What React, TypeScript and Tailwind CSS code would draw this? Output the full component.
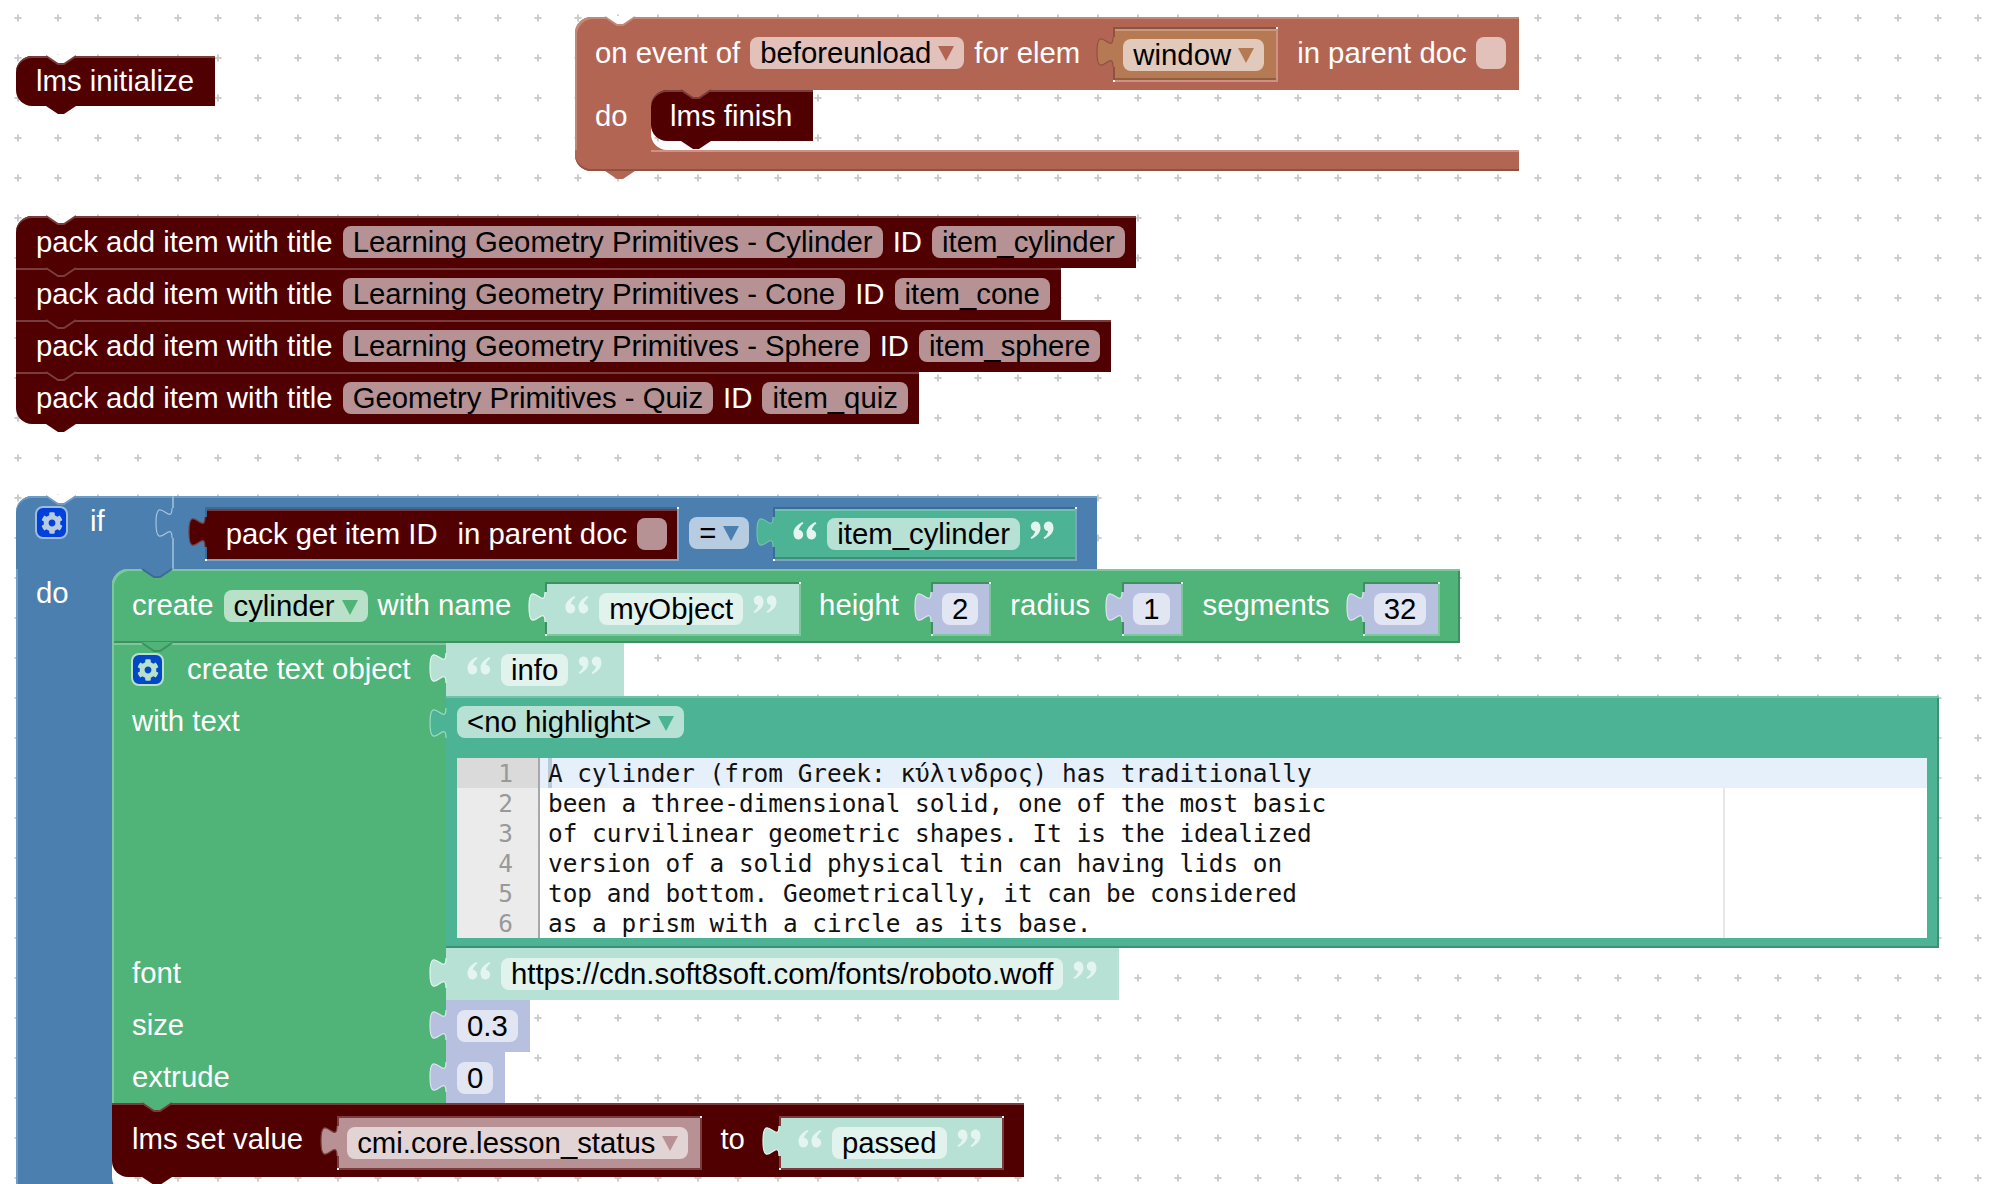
import React from "react";
import { FaCog } from "react-icons/fa";

// edge shading of the block bodies
const redBody = "bg-[#500000] shadow-[inset_0_2px_0_#7a3c3c]";
const redFrame = "border-t-[#3c6b96] border-l-[#3c6b96] border-b-[#7ba3c8] border-r-[#7ba3c8]";
const greenFrame = "border-t-[#408f60] border-l-[#408f60] border-b-[#7cc79b] border-r-[#7cc79b]";
const darkFrame = "border-t-[#7a3c3c] border-l-[#7a3c3c] border-b-[#7a3c3c] border-r-[#7a3c3c]";

type BoxProps = { className?: string; children?: React.ReactNode };

const Tab = ({ fill, stroke, className = "-left-[16px] top-0" }: { fill: string; stroke: string; className?: string }) => (
  <svg viewBox="0 0 9 30" className={`absolute h-[60px] w-[18px] overflow-visible ${className}`}>
    <path d="M9 5H8c0 10-8-8-8 7.5s8-2.5 8 7.5H9Z" fill={fill} />
    <path d="M8 5c0 10-8-8-8 7.5s8-2.5 8 7.5" fill="none" stroke={stroke} strokeWidth="0.6" />
  </svg>
);

const TopNotch = ({ fill, stroke }: { fill: string; stroke: string }) => (
  <svg viewBox="0 0 30 10" className="absolute left-[30px] top-0 h-[10px] w-[30px] overflow-visible">
    <polygon points="-1,-1 12,8 18,8 31,-1" fill={fill} />
    <polyline points="0,0 12,8 18,8 30,0" fill="none" stroke={stroke} strokeWidth="2" />
  </svg>
);

const BottomTab = ({ fill }: { fill: string }) => (
  <svg viewBox="0 0 30 8" className="absolute left-[30px] top-full h-[8px] w-[30px]">
    <polygon points="0,0 12,8 18,8 30,0" fill={fill} />
  </svg>
);

const CornerTop = ({ fill }: { fill: string }) => (
  <svg viewBox="0 0 16 16" className="absolute left-0 top-0 h-[16px] w-[16px]">
    <path d="M0 0H16A16 16 0 0 0 0 16Z" fill={fill} />
  </svg>
);

const CornerBottom = ({ fill }: { fill: string }) => (
  <svg viewBox="0 0 16 16" className="absolute bottom-0 left-0 h-[16px] w-[16px]">
    <path d="M0 16H16A16 16 0 0 1 0 0Z" fill={fill} />
  </svg>
);

const Arrow = ({ fill }: { fill: string }) => (
  <svg viewBox="0 0 16 15" className="mt-[2px] h-[15px] w-[16px] shrink-0">
    <polygon points="0,0 16,0 8,15" fill={fill} />
  </svg>
);

const Quote = ({ fill, close }: { fill: string; close?: boolean }) => (
  <svg viewBox="0 0 24 19" className={`-mt-[8px] h-[19px] w-[24px] shrink-0 ${close ? "rotate-180" : ""}`}>
    <path d="M9.500 1C4 3.500.5 7.500.5 12c0 3.700 2 6.500 4.700 6.500 3 0 5-2.300 5-5 0-2.600-2-4.500-4.300-4.500.2-2.500 2.100-5 4.600-6.500Z" fill={fill} />
    <path d="M22.500 1C17 3.500 13.500 7.500 13.500 12c0 3.700 2 6.500 4.700 6.500 3 0 5-2.300 5-5 0-2.600-2-4.500-4.300-4.500.2-2.500 2.100-5 4.600-6.500Z" fill={fill} />
  </svg>
);

const Label = ({ className = "", children }: BoxProps) => (
  <span className={`whitespace-nowrap text-white ${className}`}>{children}</span>
);

const Pill = ({ className = "", children }: BoxProps) => (
  <div className={`flex h-[32px] shrink-0 items-center whitespace-nowrap rounded-[8px] px-[10px] text-black ${className}`}>
    {children}
  </div>
);

const Drop = ({ text, color, arrow }: { text: string; color: string; arrow: string }) => (
  <Pill className={`gap-[7px] ${color}`}>
    {text}
    <Arrow fill={arrow} />
  </Pill>
);

const Check = ({ className = "" }: BoxProps) => <div className={`h-[32px] w-[30px] shrink-0 rounded-[8px] ${className}`} />;

const Gear = ({ className = "", color }: { className?: string; color: string }) => (
  <div className={`flex h-[33px] w-[33px] shrink-0 items-center justify-center rounded-[8px] border-2 ${className}`}>
    <FaCog size={22} color={color} />
  </div>
);

type ValueProps = BoxProps & { frame?: string; body: string; tabFill: string; tabStroke: string };

const Value = ({ frame, body, tabFill, tabStroke, className = "", children }: ValueProps) => (
  <div className={`relative shrink-0 ${className}`}>
    <div className={`flex h-full ${frame ? `border-2 ${frame}` : ""}`}>
      <div className={`flex h-full grow items-center ${body}`}>{children}</div>
    </div>
    {frame && <span className="absolute bottom-0 left-0 h-[2px] w-[2px] bg-white" />}
    {frame && <span className="absolute right-0 top-0 h-[2px] w-[2px] bg-white" />}
    <Tab fill={tabFill} stroke={tabStroke} />
  </div>
);

const QuotedText = ({ text, mark, pill }: { text: string; mark: string; pill: string }) => (
  <div className="flex items-center gap-[10px]">
    <Quote fill={mark} />
    <Pill className={pill}>{text}</Pill>
    <Quote fill={mark} close />
  </div>
);

const PackRow = ({ title, id, first, last }: { title: string; id: string; first?: boolean; last?: boolean }) => (
  <div className={`relative flex h-[52px] items-center gap-[10px] pl-[20px] pr-[11px] ${redBody} ${first ? "rounded-tl-[16px]" : ""} ${last ? "rounded-bl-[16px]" : ""}`}>
    <TopNotch fill={first ? "#ffffff" : "#500000"} stroke="#7a3c3c" />
    <Label>pack add item with title</Label>
    <Pill className="bg-[#b79294]">{title}</Pill>
    <Label>ID</Label>
    <Pill className="bg-[#b79294]">{id}</Pill>
    {last && <BottomTab fill="#500000" />}
  </div>
);

const CODE = [
  "A cylinder (from Greek: κύλινδρος) has traditionally",
  "been a three-dimensional solid, one of the most basic",
  "of curvilinear geometric shapes. It is the idealized",
  "version of a solid physical tin can having lids on",
  "top and bottom. Geometrically, it can be considered",
  "as a prism with a circle as its base.",
];

const Editor = () => (
  <div className="mt-[20px] flex h-[180px] w-[1470px] bg-white font-['DejaVu_Sans_Mono',monospace] text-[24.4px] leading-[32px]">
    <div className="w-[83px] shrink-0 border-r-2 border-[#a8a8a8] bg-[#ebebeb] text-right text-[#999999]">
      {CODE.map((_, i) => (
        <div key={i} className={`h-[30px] pr-[25px] ${i === 0 ? "bg-[#dadada]" : ""}`}>
          {i + 1}
        </div>
      ))}
    </div>
    <div className="relative grow whitespace-pre text-[#111111]">
      <div className="absolute bottom-0 left-[1183px] top-0 w-[2px] bg-[#e8e8e8]" />
      {CODE.map((line, i) => (
        <div key={i} className={`relative h-[30px] pl-[8px] ${i === 0 ? "bg-[#e6f0fa]" : ""}`}>
          {i === 0 && <span className="absolute left-[8px] top-0 h-[30px] w-[4px] bg-[#b9c9da]" />}
          <span className="relative">{line}</span>
        </div>
      ))}
    </div>
  </div>
);

const FieldRow = ({ label, className = "", children }: BoxProps & { label?: string }) => (
  <div className="flex">
    <div className={`flex w-[334px] shrink-0 items-start bg-[#50b378] pl-[20px] shadow-[inset_2px_0_0_#7cc79b] ${className}`}>
      <div className="flex h-[50px] items-center">
        <Label>{label}</Label>
      </div>
    </div>
    {children}
  </div>
);

const IfBlock = () => (
  <div className="absolute left-[16px] top-[496px]">
    <div className="relative flex h-[73px] w-[1081px] items-center rounded-tl-[16px] bg-[#4a7fb0] pl-[19px] shadow-[inset_0_2px_0_#6f9cc4]">
      <TopNotch fill="#ffffff" stroke="#6f9cc4" />
      <Gear className="-mt-[20px] border-[#9fbbd6] bg-[#0040dc]" color="#b7cce0" />
      <Label className="-mt-[24px] ml-[22px]">if</Label>
      <div className="absolute left-[156px] top-0 h-[73px] w-[2px] bg-[#8fb2d3]">
        <Tab fill="#4a7fb0" stroke="#a9c4dd" className="-left-[16px] top-[2px]" />
      </div>
      <Value
        frame={redFrame}
        body="bg-[#500000] pl-[19px] pr-[10px] shadow-[inset_0_2px_0_#7a3c3c]"
        tabFill="#500000"
        tabStroke="#7a3c3c"
        className="ml-[100px] mt-[3px] h-[54px]"
      >
        <Label>pack get item ID</Label>
        <Label className="ml-[20px]">in parent doc</Label>
        <Check className="ml-[10px] bg-[#b79294]" />
      </Value>
      <Drop text="=" color="ml-[10px] bg-[#b7cce0]" arrow="#4a7fb0" />
      <Value
        frame={redFrame}
        body="bg-[#4cb394] pl-[18px] pr-[21px] shadow-[inset_0_2px_0_#70c2a9,inset_0_-2px_0_#3d8f76]"
        tabFill="#4cb394"
        tabStroke="#70c2a9"
        className="ml-[24px] mt-[3px] h-[54px]"
      >
        <QuotedText text="item_cylinder" mark="#e4f4ef" pill="bg-[#b7e1d4]" />
      </Value>
    </div>

    <div className="flex">
      <div className="w-[96px] shrink-0 bg-[#4a7fb0] pl-[20px] shadow-[inset_2px_0_0_#6f9cc4]">
        <div className="flex h-[48px] items-center">
          <Label>do</Label>
        </div>
      </div>
      <div className="relative">
        <CornerTop fill="#4a7fb0" />
        <div className="relative flex h-[74px] w-[1348px] items-center rounded-tl-[16px] bg-[#50b378] pl-[20px] shadow-[inset_2px_2px_0_#7cc79b,inset_-2px_-2px_0_#408f60]">
          <TopNotch fill="#4a7fb0" stroke="#3c6b96" />
          <Label className="-mt-[3px]">create</Label>
          <Drop text="cylinder" color="ml-[10px] bg-[#b9e1c9]" arrow="#50b378" />
          <Label className="-mt-[3px] ml-[10px]">with name</Label>
          <Value
            frame={greenFrame}
            body="bg-[#b7e1d4] pl-[18px] pr-[22px]"
            tabFill="#b7e1d4"
            tabStroke="#e4f4ef"
            className="ml-[34px] mt-[5px] h-[54px]"
          >
            <QuotedText text="myObject" mark="#e4f4ef" pill="bg-[#e2f3ee]" />
          </Value>
          <Label className="-mt-[3px] ml-[18px]">height</Label>
          <Value frame={greenFrame} body="bg-[#b7c0df] pl-[9px] pr-[11px]" tabFill="#b7c0df" tabStroke="#dfe3f1" className="ml-[32px] mt-[5px] h-[54px]">
            <Pill className="bg-[#e2e5f2]">2</Pill>
          </Value>
          <Label className="-mt-[3px] ml-[19px]">radius</Label>
          <Value frame={greenFrame} body="bg-[#b7c0df] pl-[9px] pr-[11px]" tabFill="#b7c0df" tabStroke="#dfe3f1" className="ml-[32px] mt-[5px] h-[54px]">
            <Pill className="bg-[#e2e5f2]">1</Pill>
          </Value>
          <Label className="-mt-[3px] ml-[20px]">segments</Label>
          <Value frame={greenFrame} body="bg-[#b7c0df] pl-[9px] pr-[12px]" tabFill="#b7c0df" tabStroke="#dfe3f1" className="ml-[33px] mt-[5px] h-[54px]">
            <Pill className="bg-[#e2e5f2]">32</Pill>
          </Value>
        </div>

        <div className="relative">
          <div className="flex">
            <div className="flex h-[53px] w-[334px] shrink-0 items-center bg-[#50b378] pl-[19px] shadow-[inset_2px_2px_0_#7cc79b]">
              <Gear className="border-[#b9e1c9] bg-[#0048c8]" color="#b9e1c9" />
              <Label className="-mt-[2px] ml-[23px]">create text object</Label>
            </div>
            <Value body="bg-[#b7e1d4] pl-[21px]" tabFill="#b7e1d4" tabStroke="#e4f4ef" className="h-[53px] w-[178px]">
              <QuotedText text="info" mark="#e4f4ef" pill="bg-[#e2f3ee]" />
            </Value>
          </div>
          <TopNotch fill="#50b378" stroke="#408f60" />
        </div>

        <FieldRow label="with text" className="h-[252px]">
          <div className="relative h-[252px] w-[1493px] shrink-0 bg-[#4cb394] pl-[11px] pt-[10px] shadow-[inset_0_2px_0_#70c2a9,inset_-2px_-2px_0_#3d8f76]">
            <Tab fill="#4cb394" stroke="#9ddac6" className="-left-[16px] top-[2px]" />
            <Drop text="<no highlight>" color="w-fit bg-[#b7e1d4]" arrow="#4cb394" />
            <Editor />
          </div>
        </FieldRow>

        <FieldRow label="font" className="h-[52px]">
          <Value body="bg-[#b7e1d4] pl-[21px]" tabFill="#b7e1d4" tabStroke="#e4f4ef" className="h-[52px] w-[673px]">
            <QuotedText text="https://cdn.soft8soft.com/fonts/roboto.woff" mark="#e4f4ef" pill="bg-[#e2f3ee]" />
          </Value>
        </FieldRow>
        <FieldRow label="size" className="h-[52px]">
          <Value body="bg-[#b7c0df] pl-[11px]" tabFill="#b7c0df" tabStroke="#dfe3f1" className="h-[52px] w-[84px]">
            <Pill className="bg-[#e2e5f2]">0.3</Pill>
          </Value>
        </FieldRow>
        <FieldRow label="extrude" className="h-[51px]">
          <Value body="bg-[#b7c0df] pl-[11px]" tabFill="#b7c0df" tabStroke="#dfe3f1" className="h-[51px] w-[59px]">
            <Pill className="bg-[#e2e5f2]">0</Pill>
          </Value>
        </FieldRow>

        <div className="relative z-10 flex h-[74px] w-[912px] items-center rounded-bl-[16px] bg-[#500000] pl-[20px] shadow-[inset_0_2px_0_#7a3c3c]">
          <TopNotch fill="#50b378" stroke="#7a3c3c" />
          <Label className="-mt-[3px]">lms set value</Label>
          <Value
            frame={darkFrame}
            body="bg-[#b89194] pl-[8px] pr-[12px]"
            tabFill="#b89194"
            tabStroke="#7a3c3c"
            className="ml-[34px] mt-[5px] h-[54px]"
          >
            <Drop text="cmi.core.lesson_status" color="bg-[#e2d3d4]" arrow="#b89194" />
          </Value>
          <Label className="-mt-[3px] ml-[18px]">to</Label>
          <Value
            frame={darkFrame}
            body="bg-[#b7e1d4] pl-[17px] pr-[21px]"
            tabFill="#b7e1d4"
            tabStroke="#e4f4ef"
            className="ml-[34px] mt-[5px] h-[54px]"
          >
            <QuotedText text="passed" mark="#e4f4ef" pill="bg-[#e2f3ee]" />
          </Value>
          <BottomTab fill="#500000" />
        </div>
        <div className="relative h-[16px] w-[16px]">
          <CornerBottom fill="#4a7fb0" />
        </div>
      </div>
    </div>
  </div>
);

const EventBlock = () => (
  <div className="absolute left-[575px] top-[17px] w-[944px]">
    <div className="relative flex h-[73px] items-center rounded-tl-[16px] bg-[#b36553] pb-[2px] pl-[20px] shadow-[inset_2px_2px_0_#c4887a]">
      <TopNotch fill="#ffffff" stroke="#c4887a" />
      <Label>on event of</Label>
      <Drop text="beforeunload" color="ml-[10px] bg-[#e1c1ba]" arrow="#b36553" />
      <Label className="ml-[10px]">for elem</Label>
      <Value
        frame="border-t-[#8f5142] border-l-[#8f5142] border-b-[#cf9183] border-r-[#cf9183]"
        body="bg-[#b57a53] pl-[8px] pr-[12px] shadow-[inset_0_2px_0_#c79a7c,inset_0_-2px_0_#915f40]"
        tabFill="#b57a53"
        tabStroke="#8f5142"
        className="ml-[33px] mt-[4px] h-[55px]"
      >
        <Drop text="window" color="bg-[#e1cabb]" arrow="#b57a53" />
      </Value>
      <Label className="ml-[19px]">in parent doc</Label>
      <Check className="ml-[9px] bg-[#e1c1ba]" />
    </div>
    <div className="flex h-[60px]">
      <div className="flex w-[76px] shrink-0 items-start bg-[#b36553] pl-[20px] shadow-[inset_2px_0_0_#c4887a]">
        <div className="mt-[2px] flex h-[48px] items-center">
          <Label>do</Label>
        </div>
      </div>
      <div className="relative grow">
        <CornerTop fill="#b36553" />
        <CornerBottom fill="#b36553" />
        <div className={`relative flex h-[51px] w-fit items-center rounded-bl-[16px] rounded-tl-[16px] pl-[19px] pr-[21px] ${redBody}`}>
          <TopNotch fill="#b36553" stroke="#7a3c3c" />
          <Label>lms finish</Label>
          <BottomTab fill="#500000" />
        </div>
      </div>
    </div>
    <div className="relative h-[21px] rounded-bl-[16px] bg-[#b36553] shadow-[inset_0_-2px_0_#8f5142]">
      <div className="absolute left-[76px] right-0 top-0 h-[2px] bg-[#cf9183]" />
      <BottomTab fill="#b36553" />
    </div>
  </div>
);

const App: React.FC = () => (
  <div className="relative h-[1184px] w-[2000px] overflow-hidden bg-white font-['Liberation_Sans',Arial,sans-serif] text-[29.33px] leading-none">
    <svg className="absolute inset-0 h-full w-full">
      <defs>
        <pattern id="grid" width="40" height="40" patternUnits="userSpaceOnUse">
          <path d="M14.500 18h7M18 14.500v7" stroke="#cccccc" strokeWidth="2" />
        </pattern>
      </defs>
      <rect width="2000" height="1184" fill="url(#grid)" />
    </svg>

    <div className="absolute left-[16px] top-[56px] flex h-[50px] items-center rounded-bl-[16px] rounded-tl-[16px] bg-[#500000] pl-[20px] pr-[21px] shadow-[inset_0_2px_0_#7a3c3c]">
      <TopNotch fill="#ffffff" stroke="#7a3c3c" />
      <Label>lms initialize</Label>
      <BottomTab fill="#500000" />
    </div>

    <EventBlock />

    <div className="absolute left-[16px] top-[216px] flex flex-col items-start">
      <PackRow first title="Learning Geometry Primitives - Cylinder" id="item_cylinder" />
      <PackRow title="Learning Geometry Primitives - Cone" id="item_cone" />
      <PackRow title="Learning Geometry Primitives - Sphere" id="item_sphere" />
      <PackRow last title="Geometry Primitives - Quiz" id="item_quiz" />
    </div>

    <IfBlock />
  </div>
);

export default App;
